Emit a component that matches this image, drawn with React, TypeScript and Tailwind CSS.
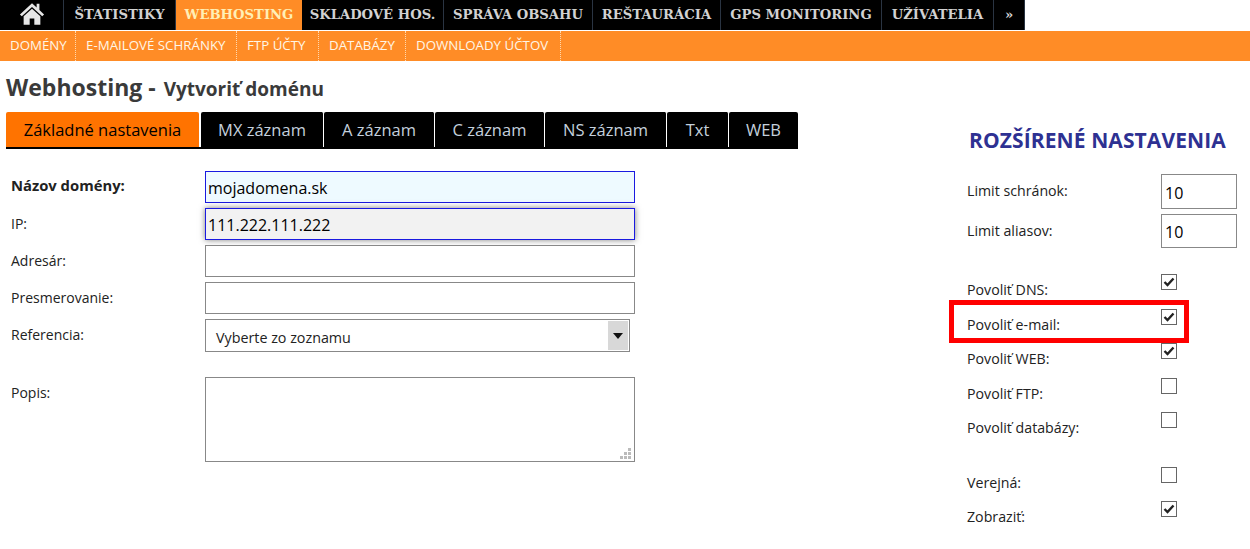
import React from "react";

const sans = "font-['Tahoma','Open_Sans','Noto_Sans',sans-serif]";

const top: [string, number, boolean?][] = [
  ["ŠTATISTIKY", 112],
  ["WEBHOSTING", 126, true],
  ["SKLADOVÉ HOS.", 142],
  ["SPRÁVA OBSAHU", 149],
  ["REŠTAURÁCIA", 128],
  ["GPS MONITORING", 161],
  ["UŽÍVATELIA", 112],
  ["»", 31],
];
const sub: [string, number][] = [
  ["DOMÉNY", 76],
  ["E-MAILOVÉ SCHRÁNKY", 161],
  ["FTP ÚČTY", 82],
  ["DATABÁZY", 87],
  ["DOWNLOADY ÚČTOV", 155],
];
const tabs: [string, number][] = [
  ["MX záznam", 123],
  ["A záznam", 111],
  ["C záznam", 110],
  ["NS záznam", 122],
  ["Txt", 62],
  ["WEB", 69],
];

function Check({ on }: { on?: boolean }) {
  return (
    <span className="flex w-4 h-4 border border-[#666] bg-white items-center justify-center">
      {on && (
        <svg width="12" height="10" viewBox="0 0 12 10">
          <path d="M1.5 5 L4.5 8 L10.5 1.5" fill="none" stroke="#222" strokeWidth="2.4" />
        </svg>
      )}
    </span>
  );
}

function Row({ label, on, mt }: { label: string; on?: boolean; mt: string }) {
  return (
    <div className={"flex h-[25px] justify-between w-[210px] " + mt}>
      <span className="self-end pb-[1px] text-[14.2px] leading-[17px] text-[#222]">{label}</span>
      <Check on={on} />
    </div>
  );
}

function Field({ label, value, bold, cls, mt }: { label: string; value?: string; bold?: boolean; cls?: string; mt: string }) {
  return (
    <div className={"flex " + mt}>
      <label className={"w-[194px] leading-[17px] text-[#222] " + (bold ? "font-bold text-[14.8px] pt-[6px]" : "text-[14px] pt-[7px]")}>{label}</label>
      <div className={"w-[430px] h-[32px] border flex items-center pl-[2px] pt-[1px] text-[16px] text-black " + (cls ?? "border-[#888] bg-white")}>{value}</div>
    </div>
  );
}

export default function App() {
  return (
    <div className={"relative w-[1250px] h-[549px] overflow-hidden bg-white " + sans}>
      <nav className="flex h-[30px] w-[1025px] bg-black font-['DejaVu_Serif',serif]">
        <div className="w-[64px] h-[30px] flex items-center justify-center border-r border-[#2a3442]">
          <svg width="26" height="25" viewBox="0 0 28 26" className="-mt-[4px]">
            <path d="M14 2 L19 6.5 V2.5 H22 V9.2 L27 14 L25 16 L14 6 L3 16 L1 14 Z" fill="#e6e6e6" />
            <path d="M14 8 L23 16 V25 H16.5 V18.5 H11.5 V25 H5 V16 Z" fill="#e6e6e6" />
          </svg>
        </div>
        {top.map(([t, w, active]) => (
          <div
            key={t}
            style={{ width: w }}
            className={
              "flex items-center justify-center text-[13.2px] font-bold whitespace-nowrap " +
              (active ? "bg-[#ff8c26] text-[#ffefb5]" : "text-[#d2d2d2] border-r border-[#2a3442]")
            }
          >
            {t}
          </div>
        ))}
      </nav>
      <div className="mt-px h-[30px] flex bg-[#ff8c26]">
        {sub.map(([t, w]) => (
          <div
            key={t}
            style={{ width: w }}
            className="flex items-center pl-[10px] text-[13.3px] text-[#fff6e6] whitespace-nowrap border-r border-dotted border-[#ffd9b0]"
          >
            {t}
          </div>
        ))}
      </div>

      <h1 className="ml-[6px] mt-[11px] h-[30px] leading-[30px] font-bold text-[#3a3a3a] text-[23px]">
        Webhosting - <span className="ml-[2px] text-[19px]">Vytvoriť doménu</span>
      </h1>

      <div className="flex">
        <div className="w-[949px] shrink-0">
          <div className="ml-[6px] mt-[10px] flex w-[792px] h-[37px] border-b-2 border-black">
            <div className="w-[193px] mr-[2px] pt-[1px] flex items-center justify-center rounded-t-[2px] bg-[#ff7300] text-black text-[16.5px]">Základné nastavenia</div>
            {tabs.map(([t, w]) => (
              <div key={t} style={{ width: w }} className="flex items-center justify-center pt-[1px] border-r border-white last:border-r-0 rounded-t-[2px] bg-black text-[#c4d0dc] text-[16.5px]">
                {t}
              </div>
            ))}
          </div>

          <form className="ml-[11px]">
            <Field label="Názov domény:" bold value="mojadomena.sk" cls="border-[#1a1ae0] bg-[#eefaff]" mt="mt-[22px]" />
            <Field label="IP:" value="111.222.111.222" cls="border-[#1a1ae0] bg-[#f2f2f2] shadow-[0_0_6px_rgba(0,0,0,0.5)]" mt="mt-[5px]" />
            <Field label="Adresár:" mt="mt-[5px]" />
            <Field label="Presmerovanie:" mt="mt-[5px]" />
            <div className="flex mt-[5px]">
              <label className="w-[194px] pt-[7px] text-[14px] leading-[17px] text-[#222]">Referencia:</label>
              <div className="w-[425px] h-[33px] border border-[#888] flex items-center pl-[10px] text-[14.3px] text-[#222] relative">
                <span className="pt-[5px]">Vyberte zo zoznamu</span>
                <span className="absolute right-[1px] top-[1px] bottom-[1px] w-[20px] bg-[#d8d8d8] flex items-center justify-center">
                  <svg width="10" height="6" viewBox="0 0 10 6"><path d="M0 0 H10 L5 6 Z" fill="#111" /></svg>
                </span>
              </div>
            </div>
            <div className="flex mt-[25px]">
              <label className="w-[194px] pt-[7px] text-[14px] leading-[17px] text-[#222]">Popis:</label>
              <div className="w-[430px] h-[85px] border border-[#888] relative">
                <svg width="11" height="11" viewBox="0 0 11 11" className="absolute right-[3px] bottom-[2px]">
                  <path d="M8 0h3v3H8zM4 4h3v3H4zM8 4h3v3H8zM0 8h3v3H0zM4 8h3v3H4zM8 8h3v3H8z" fill="#bbb" />
                </svg>
              </div>
            </div>
          </form>
        </div>

        <aside className="w-[270px] pl-[18px]">
          <h2 className="mt-[25px] h-[26px] leading-[26px] w-[285px] -ml-[18px] pl-[20px] text-[21px] tracking-[0.1px] font-bold text-[#2e3192] whitespace-nowrap">ROZŠÍRENÉ NASTAVENIA</h2>
          <div className="flex justify-between w-[270px] mt-[21px] h-[35px]">
            <span className="text-[14.2px] leading-[17px] mt-[8px] text-[#222]">Limit schránok:</span>
            <div className="w-[76px] h-[35px] border border-[#888] flex items-center pl-[3px] pt-[2px] text-[16px] text-black">10</div>
          </div>
          <div className="flex justify-between w-[270px] mt-[5px] h-[35px]">
            <span className="text-[14.2px] leading-[17px] mt-[8px] text-[#222]">Limit aliasov:</span>
            <div className="w-[76px] h-[34px] border border-[#888] flex items-center pl-[3px] pt-[2px] text-[16px] text-black">10</div>
          </div>
          <Row label="Povoliť DNS:" on mt="mt-[25px]" />
          <Row label="Povoliť e-mail:" on mt="mt-[10px]" />
          <Row label="Povoliť WEB:" on mt="mt-[9px]" />
          <Row label="Povoliť FTP:" mt="mt-[10px]" />
          <Row label="Povoliť databázy:" mt="mt-[9px]" />
          <Row label="Verejná:" mt="mt-[30px]" />
          <Row label="Zobraziť:" on mt="mt-[9px]" />
        </aside>
      </div>

      <div className="absolute left-[949px] top-[300px] w-[240px] h-[43px] border-[5px] border-[#ff0000]" />
    </div>
  );
}
